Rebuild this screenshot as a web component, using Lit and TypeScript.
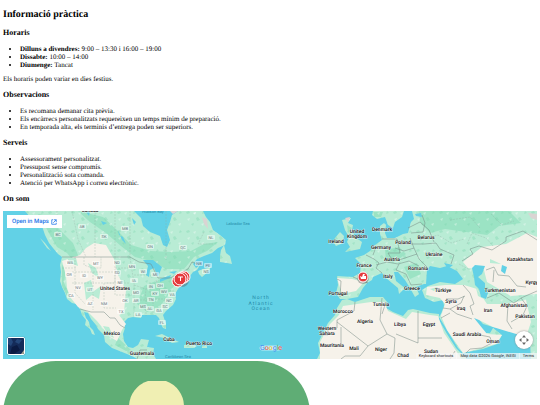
import { LitElement, html, svg, css } from "lit";
import { customElement } from "lit/decorators.js";

type Place = [string, number, number];

const LAND = [
  // North America
  "M25 211L30 217 35 223 42 226 45 235 49 243 53 248 58 254 62 257 60 265 61 272 60 281 62 287 65 293 67 299 72 303 76 304 80 309 82 315 86 320 85 325 90 329 92 334 95 335 93 330 90 327 89 322 86 318 84 312 88 313 91 319 96 325 98 329 104 335 105 342 112 348 122 352 127 354 134 357 137 359 156 359 153 354 154 348 147 347 149 340 141 339 138 345 133 348 128 347 124 341 123 334 125 328 124 322 128 318 133 317 141 318 142 315 150 315 156 315 159 318 161 324 163 328 166 329 166 324 163 315 166 311 173 305 176 299 175 294 178 289 181 285 183 281 190 276 193 272 197 270 200 265 196 268 193 264 197 259 204 256 212 253 218 248 225 245 226 240 220 235 213 230 210 222 206 217 203 211 178 211 172 215 170 222 167 230 170 240 167 247 163 245 160 236 150 232 143 226 141 218 134 211Z",
  "M220 256L221 250 224 245 226 253 230 256 232 264 227 263 220 262Z",
  "M198 271L203 269 208 268 211 266 209 271 202 277 199 274Z",
  "M190 211L198 211 200 214 194 214Z",
  "M155 336L162 334 170 338 179 342 172 343 164 338Z",
  "M184 345L189 344 197 346 194 348 184 348Z",
  "M202 346H207V348H202Z",
  "M40 238L45 243 51 251 47 248Z",
  // British Isles, Scandinavia
  "M335 238L340 232 344 236 343 243 336 246 334 243Z",
  "M342 220L351 218 348 223 353 225 352 230 355 237 362 242 360 249 345 252 350 247 347 242 349 237 345 230Z",
  "M373 211L372 215 377 219 385 217 388 225 393 228 395 222 402 217 404 211Z",
  // Europe and Asia
  "M412 211L414 219 411 222 408 233 403 234 395 238 387 238 385 233 386 225 384 223 380 226 380 234 382 240 375 245 370 251 364 255 355 258 361 264 360 273 353 277 337 276 338 285 336 293 340 299 347 299 358 297 363 288 367 283 372 280 373 277 382 273 386 278 392 283 398 288 399 294 403 290 406 289 396 281 394 272 398 272 405 280 410 288 415 297 419 294 416 287 424 284 426 284 427 270 430 266 440 268 447 266 457 271 463 279 455 284 440 282 428 286 422 290 425 298 434 302 443 300 444 306 441 314 439 317 447 330 458 348 463 353 483 349 497 344 502 335 493 328 490 333 484 333 473 317 475 315 483 324 493 327 507 329 515 331 522 335 524 341 530 343 531 359 537 359 537 211Z",
  // Africa
  "M342 300L347 299 355 302 370 297 383 297 388 303 386 308 393 312 403 316 408 310 413 309 430 313 439 314 439 320 447 334 456 348 462 354 466 357 466 359 317 359 320 353 318 343 323 333 328 323 335 315 337 308Z",
];

const DRY = [
  "M62 261L80 255 86 248 94 243 106 245 114 259 118 275 126 290 124 312 119 315 126 324 122 330 117 341 110 337 97 321 88 312 78 307 70 297 67 288 66 276Z",
  "M337 278L352 279 364 282 356 291 342 294Z",
  "M427 287L445 285 464 285 477 289 487 304 506 304 526 300 531 322 526 337 493 327 479 320 474 318 487 334 502 335 496 344 463 353 447 330 441 316 445 304 440 298 426 295Z",
  "M469 257L482 247 506 244 527 233 537 237 537 294 511 296 487 282 484 270 468 268 463 262Z",
  "M343 306L357 304 371 302 384 302 388 311 406 319 412 312 430 315 438 316 444 333 457 352 461 359 320 359 320 342 330 324 339 315Z",
];

const FOREST = [
  "M38 214L48 216 58 228 73 243 80 260 76 264 67 253 57 247 50 235 43 222Z",
  "M78 211L103 217 118 231 131 245 151 251 171 252 191 251 204 244 218 242 207 251 194 257 184 269 166 269 151 261 135 257 121 246 106 233 90 222Z",
  "M144 286L165 277 179 277 171 291 161 305 147 312 137 304Z",
  "M419 211L486 211 509 211 521 223 499 226 487 235 466 232 445 229 430 233 420 222Z",
  "M374 212L383 212 381 217 374 217ZM385 250L399 247 406 254 393 263 386 260ZM404 267L417 263 421 274 410 279Z",
  "M347 225L352 228 348 232Z",
  "M62 265L66 268 64 283 70 295 67 296 62 286ZM118 338L131 350 126 351 115 345Z",
];

const WATER = [
  "M143 260L153 260 162 267 158 277 154 268 150 270 149 277 146 275 148 266ZM160 279L171 275 170 278 160 282ZM169 272L177 271 174 274Z",
  "M118 230L122 240 126 244 123 237 119 235ZM101 221L107 223 103 225ZM86 212L90 211 89 216ZM132 218L136 222 134 225Z",
  "M472 268L475 265 485 266 482 274 478 277 485 283 485 288 488 293 486 299 481 297 479 289 475 285 474 277Z",
  "M502 265L507 267 505 274 501 271ZM415 214L421 213 422 217 416 216ZM444 263L453 265 448 269Z",
];

const BORDERS = [
  "M62 257H130L139 262 151 264 158 278 170 278 176 275 188 269 192 262 197 264",
  "M80 309L91 312 104 312 110 318 115 318 120 325 125 328",
  "M137 359L140 350 147 350 M340 297L341 281 337 279 M353 277L368 283",
  "M366 255L374 259 379 263 376 268 382 273 M376 247L373 255 M382 239L397 239 400 253 388 253 M395 248L404 251 414 248 410 238",
  "M388 253L391 258 399 260 408 257 417 254 M376 265L387 262 398 264 409 261 419 266 M399 264L396 270 406 274 411 285 422 284",
  "M400 244H424L436 243 440 249 454 255 451 264 M411 233L423 232 425 223 422 215",
  "M408 228L420 222 429 230 434 242 M414 248L419 259 427 267",
  "M462 261L473 254 470 249 479 246 492 250 506 241 506 237 523 231 537 240",
  "M486 270L494 267 498 275 509 276 517 286 526 287 M493 282L494 270 M487 298L499 293 514 303 521 298 537 291",
  "M508 304L507 321 512 329 M521 298L527 306 523 315 511 322 M463 285L470 293 474 304 470 306 473 315",
  "M446 299H458L465 296 M443 308L450 309 461 303 464 296 M450 309L457 314 472 319 M441 318L450 313",
  "M355 302L354 311 337 320V328H328V335H320 M337 322L368 346 387 334 380 320 382 298 M341 327V345H322",
  "M387 334L395 338 394 353 390 359 M385 305L382 314 M418 311V338H442 M418 338V343L396 334",
  "M368 346L360 356H345L341 359 M450 359L455 351 M466 353L470 349 482 348 492 343 490 337 480 335",
];

const STATES = [
  "M57 211V238M72 211L78 239 86 257M95 211V257M115 211V257M130 211V258M62 268H77M75 283V257M84 257V265L92 268H101V257",
  "M72 272H93V283H72M75 283V293L85 304M93 272H115V283H93V310M104 283V308H116M115 257V295H132M115 268H129M106 283H130M130 258L134 283V317",
  "M134 275H147M134 285L146 289 145 300M134 300H146V316M146 289L158 281M150 282V294M156 280L160 291 174 291M146 299H170M153 299V314M164 300L169 307M166 211V260M204 232L198 244 213 244",
  "M420 240L438 235 451 243 464 239M450 220L470 217 480 228M491 214L502 225 514 221M467 244L472 233 486 238 493 246M459 264L470 270",
];

const COUNTRIES: Place[] = [
  ["United States", 115, 290], ["Mexico", 112, 335], ["Cuba", 169, 341],
  ["Puerto Rico", 199, 345], ["Guatemala", 142, 355], ["Canada", 90, 212],
  ["Ireland", 336, 243], ["United", 357, 233], ["Kingdom", 357, 238],
  ["Denmark", 382, 231], ["Germany", 381, 249], ["Poland", 403, 244],
  ["Belarus", 426, 239], ["Ukraine", 434, 256], ["France", 364, 267],
  ["Austria", 392, 261], ["Italy", 388, 278], ["Romania", 418, 270],
  ["Kazakhstan", 520, 261], ["Portugal", 338, 295], ["Morocco", 343, 313],
  ["Tunisia", 381, 306], ["Algeria", 365, 323], ["Libya", 400, 326],
  ["Western", 327, 330], ["Sahara", 327, 335], ["Mauritania", 332, 347],
  ["Mali", 354, 350], ["Niger", 381, 351], ["Chad", 403, 357],
  ["Sudan", 431, 353], ["Egypt", 429, 326], ["Saudi Arabia", 467, 336],
  ["Oman", 493, 343], ["Greece", 412, 290], ["Türkiye", 443, 292],
  ["Syria", 451, 303], ["Iraq", 461, 310], ["Iran", 488, 312],
  ["Turkmenistan", 500, 292], ["Afghanistan", 514, 307],
  ["Pakistan", 525, 318], ["Kyrgyz", 533, 284],
];

const REGIONS: Place[] = [
  ["BC", 58, 236], ["AB", 82, 228], ["SK", 104, 238], ["MB", 125, 230],
  ["ON", 150, 248], ["QC", 183, 249], ["NL", 211, 239], ["NB", 199, 265],
  ["PE", 208, 267], ["NS", 206, 273], ["WA", 70, 264], ["MT", 96, 265],
  ["ND", 117, 264], ["MN", 132, 268], ["OR", 69, 276], ["ID", 84, 277],
  ["WY", 100, 279], ["SD", 117, 274], ["WI", 143, 273], ["MI", 155, 276],
  ["IA", 134, 282], ["NE", 120, 284], ["NV", 78, 289], ["UT", 90, 291],
  ["CA", 71, 297], ["AZ", 90, 305], ["NM", 104, 305], ["OK", 125, 302],
  ["TX", 121, 313], ["IN", 151, 288], ["OH", 160, 287], ["MO", 136, 294],
  ["KY", 155, 295], ["WV", 164, 293], ["VA", 172, 296], ["AR", 136, 302],
  ["TN", 151, 301], ["NC", 169, 302], ["MS", 143, 308], ["AL", 150, 310],
  ["GA", 159, 312], ["SC", 165, 308], ["LA", 138, 316], ["FL", 162, 324],
];

const SEAS: Place[] = [
  ["Hudson Bay", 153, 213], ["Labrador Sea", 238, 225], ["Caribbean Sea", 178, 358],
];

const OCEAN: Place[] = [["North", 261, 299], ["Atlantic", 261, 305], ["Ocean", 261, 310]];

const paths = (list: string[], name: string) => list.map((d) => svg`<path class=${name} d=${d}></path>`);
const labels = (list: Place[], name: string) =>
  list.map(([text, x, y]) => svg`<text class=${name} x=${x} y=${y}>${text}</text>`);

@customElement("location-map")
export class LocationMap extends LitElement {
  static styles = css`
    :host { display: block; position: relative; height: 148px; overflow: hidden; background: #62d1e6; font-family: Roboto, sans-serif; }
    .canvas { display: block; width: 100%; height: 100%; }
    .land { fill: #b9ecd5; }
    .dry { fill: #f6f2ea; }
    .forest { fill: #9be3c4; }
    .water { fill: #62d1e6; }
    .speckle { fill: url(#speckle); }
    .border { fill: none; stroke: #738681; stroke-width: 0.5; stroke-linejoin: round; }
    .state { fill: none; stroke: #91aaa1; stroke-width: 0.4; stroke-dasharray: 2 1; opacity: 0.8; }
    text { text-anchor: middle; }
    .country { font-size: 5px; font-weight: 600; fill: #222; stroke: rgb(255 255 255 / 70%); stroke-width: 1; paint-order: stroke; stroke-linejoin: round; }
    .plate { fill: #fff; opacity: 0.5; }
    .region { font-size: 4px; fill: #65737b; }
    .sea { font-size: 4px; fill: #2489a6; }
    .ocean { font-size: 5px; letter-spacing: 1px; fill: #2489a6; }
    .halo { font-size: 7px; fill: #fff; stroke: #fff; stroke-width: 1; opacity: 0.6; }
    .google { font-size: 7px; }
    .blue { fill: #4285f4; }
    .red { fill: #ea4335; }
    .yellow { fill: #fbbc04; }
    .green { fill: #34a853; }
    .pin { fill: #e5393b; stroke: #fff; stroke-width: 1; }
    .shade { fill: #555; opacity: 0.4; }
    .glyph { fill: none; stroke: #fff; stroke-width: 1; }
    .solid { fill: #fff; }
    .open { position: absolute; left: 4px; top: 4px; height: 13px; padding: 0 5px; display: flex; align-items: center; gap: 2px; background: #fff; color: #1a73e8; font-size: 6px; font-weight: 500; text-decoration: none; white-space: nowrap; }
    .open svg { width: 6px; height: 6px; fill: none; stroke: currentColor; stroke-width: 1; }
    button { padding: 0; border: 0; font: inherit; color: inherit; background: none; cursor: pointer; }
    .layers { position: absolute; left: 4px; bottom: 4px; width: 18px; height: 18px; border: 1px solid #fff; border-radius: 2px; overflow: hidden; box-shadow: 0 0 1px #456; }
    .camera { position: absolute; right: 4px; bottom: 10px; width: 18px; height: 18px; border-radius: 50%; background: #fff; box-shadow: 0 0 2px #888; }
    .layers svg, .camera svg { display: block; width: 100%; height: 100%; }
    .camera svg { fill: #666; }
    .legal { position: absolute; right: 0; bottom: 0; height: 6px; display: flex; align-items: center; font-size: 4px; line-height: 6px; color: #222; white-space: nowrap; }
    .legal > * { height: 6px; padding: 0 3px; background: rgb(245 245 245 / 75%); color: inherit; text-decoration: none; }
    .legal > * + * { border-left: 1px solid rgb(255 255 255 / 40%); }
  `;

  render() {
    return html`
      <svg class="canvas" viewBox="3 211 534 148" preserveAspectRatio="xMidYMid slice" role="img" aria-label="Mapa">
        <defs>
          <pattern id="speckle" width="23" height="19" patternUnits="userSpaceOnUse">
            <path d="M2 3L5 2 6 4 3 5ZM12 9L14 8 16 11 13 12ZM19 2L21 4 18 5ZM7 15L10 14 9 17Z" fill="#77d2aa" opacity=".35"></path>
            <path d="M9 4L12 3 11 6ZM3 10L6 9 5 12ZM17 15L20 14 19 17Z" fill="#fff" opacity=".35"></path>
          </pattern>
        </defs>
        ${paths(LAND, "land")}${paths(FOREST, "forest")}${paths(LAND.slice(0, -1), "speckle")}
        ${paths(DRY, "dry")}
        <path class="land" d="M84 283L91 280 94 291 101 286 99 299 92 295 86 300ZM67 258L76 258 78 266 70 263ZM88 263L96 268 99 278 92 273ZM103 326L109 327 114 338 108 335ZM490 259L501 264 490 263ZM430 289L438 287 434 291ZM476 288L484 299 478 296Z"></path>
        <path fill="#d9d4d3" d="M345 218L350 217 348 222ZM202 217L207 219 208 229 204 224ZM528 213L537 214 537 220 531 218ZM170 211L178 211 173 214Z"></path>
        ${paths(WATER, "water")}${paths(STATES, "state")}${paths(BORDERS, "border")}
        ${REGIONS.map(([, x, y]) => svg`<rect class="plate" x=${x - 4} y=${y - 4} width="8" height="5" rx="1"></rect>`)}
        ${labels(REGIONS, "region")}${labels(SEAS, "sea")}${labels(OCEAN, "ocean")}${labels(COUNTRIES, "country")}
        <rect class="halo" x="260" y="346" width="21" height="4" rx="2"></rect>
        <text class="google" x="271" y="350"><tspan class="blue">G</tspan><tspan class="red">o</tspan><tspan class="yellow">o</tspan><tspan class="blue">g</tspan><tspan class="green">l</tspan><tspan class="red">e</tspan></text>
        <circle class="shade" cx="182" cy="280" r="7"></circle>
        <circle class="pin" cx="184" cy="277" r="6"></circle>
        <circle class="pin" cx="178" cy="281" r="6"></circle>
        <circle class="pin" cx="182" cy="278" r="6"></circle>
        <circle class="pin" cx="180" cy="279" r="6"></circle>
        <path class="glyph" d="M178 277H183M180.500 277V281"></path>
        <circle class="shade" cx="363" cy="278" r="6"></circle>
        <circle class="pin" cx="363" cy="277" r="5"></circle>
        <path class="solid" d="M360 276L362 277 363 274 365 274 364 276H366V279H361Z"></path>
      </svg>
      <a class="open" href="#maps">Open in Maps
        <svg viewBox="0 0 8 8" aria-hidden="true"><path d="M3 1H1V7H7V5M4 1H7V4M7 1L3 5"></path></svg>
      </a>
      <button class="layers" aria-label="Satellite">
        <svg viewBox="0 0 16 16"><path fill="#142b59" d="M0 0H16V16H0Z"></path><path fill="#24477b" d="M0 0H3L5 4 3 8 0 6ZM9 1L14 2 11 6 7 4Z"></path><path fill="#0b1b43" d="M4 9L9 7 12 12 6 16H2Z"></path><path fill="#a9a28e" d="M16 12L13 16H16Z"></path></svg>
      </button>
      <button class="camera" aria-label="Map camera controls">
        <svg viewBox="0 0 18 18"><path d="M9 4L11 6.500H7ZM9 14L7 11.500H11ZM4 9L6.500 7V11ZM14 9L11.500 11V7Z"></path></svg>
      </button>
      <div class="legal">
        <button>Keyboard shortcuts</button><span>Map data ©2026 Google, INEGI</span><a href="#terms">Terms</a>
      </div>
    `;
  }
}

@customElement("app-root")
export class AppRoot extends LitElement {
  static styles = css`
    :host { display: block; padding: 9px 3px 0; background: #fff; color: #000; font: 7px/8px "Liberation Serif", serif; text-rendering: geometricPrecision; }
    h2 { margin: 0 0 7px; font-size: 10px; line-height: 12px; }
    h3 { margin: 7px 0; font-size: 8px; line-height: 10px; }
    ul { margin: 6px 0; padding-left: 17px; }
    p { margin: 6px 0; }
    location-map { margin-top: 7px; }
    .figure { display: block; width: 307px; max-width: 100%; height: 44px; margin-top: 2px; }
  `;

  render() {
    return html`
      <h2>Informació pràctica</h2>
      <h3>Horaris</h3>
      <ul>
        <li><strong>Dilluns a divendres:</strong> 9:00 – 13:30 i 16:00 – 19:00</li>
        <li><strong>Dissabte:</strong> 10:00 – 14:00</li>
        <li><strong>Diumenge:</strong> Tancat</li>
      </ul>
      <p>Els horaris poden variar en dies festius.</p>
      <h3>Observacions</h3>
      <ul>
        <li>Es recomana demanar cita prèvia.</li>
        <li>Els encàrrecs personalitzats requereixen un temps mínim de preparació.</li>
        <li>En temporada alta, els terminis d’entrega poden ser superiors.</li>
      </ul>
      <h3>Serveis</h3>
      <ul>
        <li>Assessorament personalitzat.</li>
        <li>Pressupost sense compromís.</li>
        <li>Personalització sota comanda.</li>
        <li>Atenció per WhatsApp i correu electrònic.</li>
      </ul>
      <h3>On som</h3>
      <location-map></location-map>
      <svg class="figure" viewBox="0 0 307 44" preserveAspectRatio="xMinYMin slice" aria-hidden="true">
        <rect width="307" height="160" rx="53" fill="#5fad75"></rect>
        <path fill="#f0efb3" d="M145 20H163A27 27 0 0 1 181 45H126A27 27 0 0 1 145 20Z"></path>
      </svg>
    `;
  }
}
